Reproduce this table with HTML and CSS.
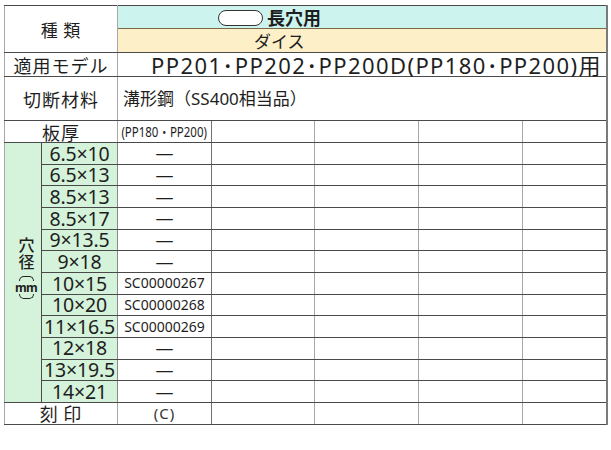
FILE: index.html
```html
<!DOCTYPE html>
<html lang="ja">
<head>
<meta charset="utf-8">
<link rel="stylesheet" href="styles.css">
</head>
<body>
<table class="spec">
  <colgroup>
    <col class="c-a"><col class="c-b"><col class="c-d1"><col class="c-d2"><col class="c-d3"><col class="c-d4"><col class="c-d5">
  </colgroup>
  <tbody>
    <tr class="r-type1">
      <th class="lab lab-type" colspan="2" rowspan="2">種&thinsp;類</th>
      <td class="type-cyan" colspan="5"><span class="pill"></span><span class="type-name">長穴用</span></td>
    </tr>
    <tr class="r-type2">
      <td class="type-beige" colspan="5">ダイス</td>
    </tr>
    <tr class="r-model">
      <th class="lab" colspan="2">適用モデル</th>
      <td class="model" colspan="5">PP201･PP202･PP200D(PP180･PP200)用</td>
    </tr>
    <tr class="r-mat">
      <th class="lab" colspan="2">切断材料</th>
      <td class="mat" colspan="5">溝形鋼（SS400相当品）</td>
    </tr>
    <tr class="r-thick">
      <th class="lab" colspan="2">板厚</th>
      <td class="v small"><span class="cond">(PP180・PP200)</span></td>
      <td class="e"></td><td class="e"></td><td class="e"></td><td class="e"></td>
    </tr>
    <tr class="r-size">
      <th class="hole" rowspan="12">
        <div class="vt">
          <span class="vch">穴</span>
          <span class="vch">径</span>
          <span class="mmwrap"><span class="arc arc-top"></span><span class="mm">mm</span><span class="arc arc-bot"></span></span>
        </div>
      </th>
      <th class="sz">6.5×10</th><td class="v dash">—</td>
      <td class="e"></td><td class="e"></td><td class="e"></td><td class="e"></td>
    </tr>
    <tr class="r-size"><th class="sz">6.5×13</th><td class="v dash">—</td><td class="e"></td><td class="e"></td><td class="e"></td><td class="e"></td></tr>
    <tr class="r-size"><th class="sz">8.5×13</th><td class="v dash">—</td><td class="e"></td><td class="e"></td><td class="e"></td><td class="e"></td></tr>
    <tr class="r-size"><th class="sz">8.5×17</th><td class="v dash">—</td><td class="e"></td><td class="e"></td><td class="e"></td><td class="e"></td></tr>
    <tr class="r-size"><th class="sz">9×13.5</th><td class="v dash">—</td><td class="e"></td><td class="e"></td><td class="e"></td><td class="e"></td></tr>
    <tr class="r-size"><th class="sz">9×18</th><td class="v dash">—</td><td class="e"></td><td class="e"></td><td class="e"></td><td class="e"></td></tr>
    <tr class="r-size"><th class="sz">10×15</th><td class="v code">SC00000267</td><td class="e"></td><td class="e"></td><td class="e"></td><td class="e"></td></tr>
    <tr class="r-size"><th class="sz">10×20</th><td class="v code">SC00000268</td><td class="e"></td><td class="e"></td><td class="e"></td><td class="e"></td></tr>
    <tr class="r-size"><th class="sz">11×16.5</th><td class="v code">SC00000269</td><td class="e"></td><td class="e"></td><td class="e"></td><td class="e"></td></tr>
    <tr class="r-size"><th class="sz">12×18</th><td class="v dash">—</td><td class="e"></td><td class="e"></td><td class="e"></td><td class="e"></td></tr>
    <tr class="r-size"><th class="sz">13×19.5</th><td class="v dash">—</td><td class="e"></td><td class="e"></td><td class="e"></td><td class="e"></td></tr>
    <tr class="r-size"><th class="sz">14×21</th><td class="v dash">—</td><td class="e"></td><td class="e"></td><td class="e"></td><td class="e"></td></tr>
    <tr class="r-mark">
      <th class="lab" colspan="2">刻&thinsp;印</th>
      <td class="v mark">(C)</td>
      <td class="e"></td><td class="e"></td><td class="e"></td><td class="e"></td>
    </tr>
  </tbody>
</table>
</body>
</html>
```

FILE: styles.css
```css
html, body {
  margin: 0;
  padding: 0;
  background: #ffffff;
}

body {
  font-family: "Noto Sans", "Noto Sans CJK JP", sans-serif;
  color: #1e1e1e;
}

.spec {
  margin: 5px 0 0 4px;
  border-collapse: collapse;
  table-layout: fixed;
  width: 602px;
  border-top: 1px solid #555;
  border-left: 1px solid #555;
  border-bottom: 1px solid #555;
  border-right: 2px solid #7a7a7a;
}

.c-a { width: 37px; }
.c-b { width: 76px; }
.c-d1 { width: 94px; }
.c-d2 { width: 103px; }
.c-d3 { width: 104px; }
.c-d4 { width: 104px; }
.c-d5 { width: 84px; }

.spec th,
.spec td {
  padding: 0;
  border-top: 1px solid #4a4a4a;
  border-bottom: 1px solid #4a4a4a;
  border-left: 1px solid #a8a8a8;
  border-right: 1px solid #a8a8a8;
  font-weight: 400;
  line-height: 1;
  white-space: nowrap;
}

.r-type1 { height: 23px; }
.r-type2 { height: 24px; }
.r-model { height: 24px; }
.r-mat { height: 44px; }
.r-thick { height: 22px; }
.r-size { height: 21.67px; }
.r-mark { height: 22px; }

.lab {
  font-family: "Noto Sans CJK JP", sans-serif;
  font-size: 18px;
  font-weight: 500;
  letter-spacing: 1px;
  text-align: center;
  border-right-color: #8a8a8a;
}

.lab-type {
  font-size: 17px;
}

.type-cyan {
  background: #cdf3ef;
  text-align: left;
  padding-left: 100px !important;
  border-bottom-color: #7a6a4a !important;
}

.pill {
  display: inline-block;
  width: 43px;
  height: 14px;
  border: 1px solid #333;
  border-radius: 8px;
  background: #ffffff;
  vertical-align: -1px;
  margin-right: 4px;
}

.type-name {
  font-family: "Noto Sans CJK JP", sans-serif;
  font-size: 18px;
  font-weight: 700;
}

.type-beige {
  background: #fdf0c9;
  text-align: left;
  padding-left: 136px !important;
  font-family: "Noto Sans CJK JP", sans-serif;
  font-size: 17px;
  font-weight: 500;
}

.model {
  font-size: 22px;
  letter-spacing: 1.4px;
  text-align: left;
  padding-left: 33px !important;
}

.mat {
  font-size: 17px;
  font-weight: 500;
  text-align: left;
  padding-left: 5px !important;
}

.hole {
  background: #d5f2da;
  border-right-color: #4a4a4a !important;
  vertical-align: top;
  padding-left: 7px !important;
}

.vt {
  display: flex;
  flex-direction: column;
  align-items: center;
  margin-top: 93px;
}

.vch {
  font-family: "Noto Sans CJK JP", sans-serif;
  font-size: 16px;
  font-weight: 500;
  line-height: 17px;
  height: 17px;
}

.mmwrap {
  display: flex;
  flex-direction: column;
  align-items: center;
  margin-top: 6px;
}

.arc {
  display: block;
  width: 13px;
  height: 4px;
  border: 1.5px solid #222;
}

.arc-top {
  border-bottom: none;
  border-radius: 8px 8px 0 0;
}

.arc-bot {
  border-top: none;
  border-radius: 0 0 8px 8px;
}

.mm {
  font-size: 12px;
  line-height: 13px;
  font-weight: 700;
  letter-spacing: -0.8px;
  margin: 0 0 0 -1px;
}

.sz {
  background: #d5f2da;
  font-size: 19.5px;
  text-align: center;
  border-right-color: #8a8a8a !important;
  letter-spacing: -0.2px;
}

.v {
  text-align: center;
  border-right-color: #707070 !important;
}

.dash {
  font-size: 18px;
}

.code {
  font-size: 14px;
}

.mark {
  font-size: 15px;
  letter-spacing: 1px;
  color: #333;
}

.small {
  font-size: 14px;
}

.cond {
  display: inline-block;
  transform: scaleX(0.82);
  transform-origin: center;
  margin: 0 -10px;
}

.e {
  background: #ffffff;
}
```
